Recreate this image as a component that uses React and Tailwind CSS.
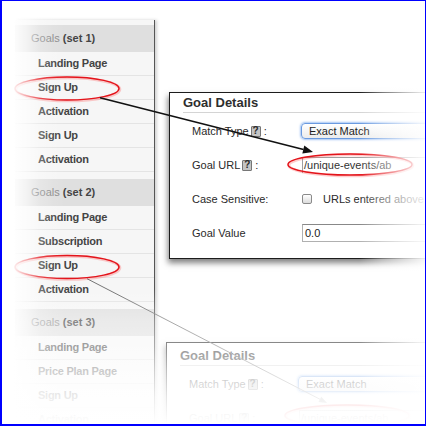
const groups = [
  { name: 'set 1', items: ['Landing Page', 'Sign Up', 'Activation', 'Sign Up', 'Activation'] },
  { name: 'set 2', items: ['Landing Page', 'Subscription', 'Sign Up', 'Activation'] },
  { name: 'set 3', items: ['Landing Page', 'Price Plan Page', 'Sign Up', 'Activation'] },
]

function Sidebar() {
  return (
    <div className="ml-[13px] mt-[19px] w-[140px] shrink-0 flex flex-col bg-[#f6f6f6] border-r border-[#555] shadow-[2px_0_3px_rgba(0,0,0,0.18)]">
      <div className="h-px bg-gradient-to-r from-[#eeeeee] to-[#4a4a4a]" />
      <div className="pt-[5px] flex flex-col gap-[7px]">
        {groups.map((g) => (
          <div key={g.name}>
            <div className="h-[27px] flex items-center pl-[16px] bg-[#dfdfdf] text-[11px]">
              <span className="text-[#8a8a8a]">Goals</span>
              <span className="ml-[3px] font-bold text-[#444]">({g.name})</span>
            </div>
            {g.items.map((it, i) => (
              <div
                key={i}
                className="h-[24px] flex items-center pl-[23px] border-b border-[#e4e4e4] text-[11px] font-bold text-[#444] tracking-[-0.25px]"
              >
                {it}
              </div>
            ))}
          </div>
        ))}
      </div>
    </div>
  )
}

function Help() {
  return (
    <span className="inline-flex items-center justify-center w-[10px] h-[11px] ml-[2px] mr-[3px] border border-[#777] bg-[#c4c4c4] text-[#2a2a2a] text-[10px] font-bold leading-none rounded-[1px]">
      ?
    </span>
  )
}

function FormRow({ label, children }) {
  return (
    <div className="h-[34px] flex items-center">
      <div className="w-[131px] shrink-0 pl-[22px] flex items-center text-[11px] text-[#2a2a2a]">{label}</div>
      {children}
    </div>
  )
}

function GoalDetails({ className, titleClass }) {
  return (
    <div className={`w-[270px] shrink-0 bg-white border border-[#1c1c1c] shadow-[-1px_4px_6px_rgba(0,0,0,0.5)] pb-[8px] ${className}`}>
      <div className={`ml-[13px] pb-px leading-[16px] text-[13px] font-bold text-[#2e2e2e] border-b border-[#d4d4d4] ${titleClass}`}>
        Goal Details
      </div>
      <div className="mt-px">
        <FormRow label={<>Match Type<Help />:</>}>
          <div className="w-[130px] h-[16px] flex items-center pl-[7px] rounded-[4px] border border-[#6a9ae0] bg-gradient-to-b from-white to-[#ececec] shadow-[0_0_2px_1px_rgba(90,150,235,0.55)] text-[11px] text-[#1e1e1e]">
            Exact Match
          </div>
        </FormRow>
        <FormRow label={<>Goal URL<Help />:</>}>
          <div className="ml-px w-[125px] h-[16px] flex items-center pl-px border-t border-l border-[#a0a0a0] text-[11px] text-[#333] whitespace-nowrap">
            /unique-events/ab
          </div>
        </FormRow>
        <FormRow label="Case Sensitive:">
          <div className="ml-px w-[10px] h-[10px] rounded-[2px] border border-[#8a8a8a] bg-gradient-to-b from-white to-[#dcdcdc] shrink-0" />
          <span className="ml-[11px] text-[11px] text-[#2a2a2a] whitespace-nowrap">URLs entered above are case sensitive</span>
        </FormRow>
        <FormRow label="Goal Value">
          <div className="ml-px w-[130px] h-[18px] flex items-center pl-[2px] border border-[#b0b0b0] border-t-[#888] text-[11px] text-[#222]">
            0.0
          </div>
        </FormRow>
      </div>
    </div>
  )
}

function RedEllipse({ cx, cy, rx, ry }) {
  return (
    <g fill="none">
      <ellipse cx={cx + 0.8} cy={cy + 0.8} rx={rx} ry={ry} stroke="#ff5a5a" strokeWidth="3" opacity="0.3" />
      <ellipse cx={cx} cy={cy} rx={rx} ry={ry} stroke="#e3141b" strokeWidth="1.5" />
    </g>
  )
}

function Marks() {
  return (
    <svg className="absolute left-[-2px] top-[-1px] pointer-events-none" width="426" height="426" viewBox="0 0 426 426">
      <RedEllipse cx={67} cy={88.5} rx={52} ry={11.5} />
      <RedEllipse cx={67} cy={267} rx={52} ry={11.5} />
      <RedEllipse cx={350} cy={164.5} rx={62} ry={10.5} />
      <RedEllipse cx={347} cy={415.5} rx={62} ry={10.5} />
      {/* arrow sidebar -> panel 1 */}
      <line x1="100" y1="97.7" x2="303.5" y2="149.5" stroke="#111" strokeWidth="1.6" />
      <polygon points="313,152 304.3,145.6 302.3,153.4" fill="#111" />
      {/* arrow sidebar -> panel 2 */}
      <line x1="87" y1="278.7" x2="320" y2="399.3" stroke="#666" strokeWidth="0.9" />
      <polygon points="327,403 321.3,396.7 318.5,402" fill="#888" />
    </svg>
  )
}

export default function App() {
  return (
    <div className="relative w-[426px] h-[426px] overflow-hidden bg-white border-l-2 border-b-2 border-t border-r border-[#0000ff] font-['Liberation_Sans',Arial,sans-serif]">
      <div className="flex h-full">
        <Sidebar />
        <div className="flex flex-col shrink-0">
          <GoalDetails className="ml-[14px] mt-[91px]" titleClass="pt-[2px]" />
          <GoalDetails className="ml-[11px] mt-[83px]" titleClass="pt-[5px]" />
        </div>
      </div>

      <Marks />

      {/* fades */}
      <div className="absolute left-0 top-0 bottom-0 w-[64px] pointer-events-none bg-[linear-gradient(to_right,#fff_0%,rgba(255,255,255,0.9)_20%,rgba(255,255,255,0.6)_40%,rgba(255,255,255,0.25)_58%,rgba(255,255,255,0.08)_80%,rgba(255,255,255,0)_100%)]" />
      <div className="absolute right-0 top-0 bottom-0 w-[66px] pointer-events-none bg-[linear-gradient(to_right,rgba(255,255,255,0)_0%,rgba(255,255,255,0.4)_35%,rgba(255,255,255,0.68)_67%,rgba(255,255,255,0.92)_100%)]" />
      <div className="absolute left-0 right-0 bottom-0 h-[135px] pointer-events-none bg-[linear-gradient(to_bottom,rgba(255,255,255,0)_0%,rgba(255,255,255,0.36)_24%,rgba(255,255,255,0.5)_43%,rgba(255,255,255,0.72)_61%,rgba(255,255,255,0.88)_79%,#fff_100%)]" />
    </div>
  )
}
